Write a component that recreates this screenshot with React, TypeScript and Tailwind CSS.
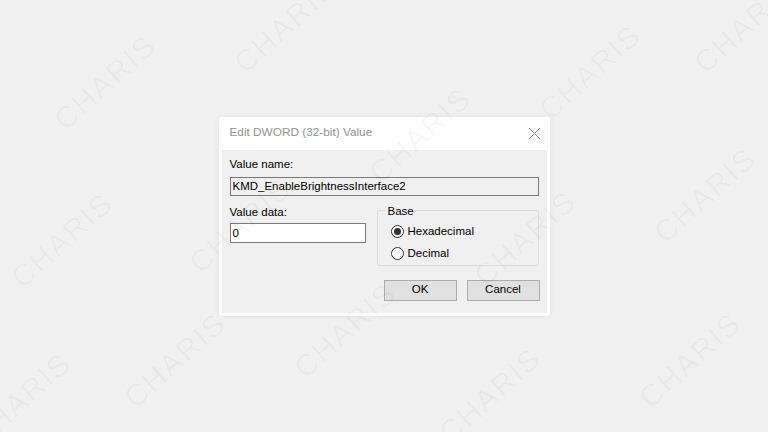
import React from 'react';

const marks: [number, number][] = [
  [105, 82],
  [285, 25],
  [420, 135],
  [590, 72],
  [745, 25],
  [62, 240],
  [240, 225],
  [525, 238],
  [705, 195],
  [175, 360],
  [345, 330],
  [490, 395],
  [690, 360],
  [20, 400],
];

const Watermark = () => (
  <div className="pointer-events-none absolute inset-0 overflow-hidden">
    {marks.map(([x, y], i) => (
      <span
        key={i}
        className="absolute -translate-x-1/2 -translate-y-1/2 -rotate-[42deg] font-['Liberation_Sans',sans-serif] text-[30px] font-normal tracking-[2px] text-black/[0.035]"
        style={{ left: x, top: y }}
      >
        CHARIS
      </span>
    ))}
  </div>
);

const Radio = ({ checked, label }: { checked?: boolean; label: string }) => (
  <label className="flex items-center gap-[3px] h-[22px]">
    <span className="w-[13px] h-[13px] rounded-full border border-[#333] bg-white flex items-center justify-center">
      {checked && <span className="w-[7px] h-[7px] rounded-full bg-[#333]" />}
    </span>
    <span>{label}</span>
  </label>
);

export default function App() {
  return (
    <div className="relative w-full h-[432px] bg-[#f0f0f0] flex items-center justify-center font-['Liberation_Sans',Arial,sans-serif] text-[11.5px] text-black">
      <div className="w-[331px] h-[199px] bg-white rounded-[3px] shadow-[0_0_6px_rgba(0,0,0,0.06)] flex flex-col">
        <div className="h-[33px] flex items-center justify-between pl-[11px] pr-[9px]">
          <span className="text-[11.8px] text-[#929292]">Edit DWORD (32-bit) Value</span>
          <svg width="13" height="13" viewBox="0 0 13 13" className="text-[#8a8a8a]">
            <path d="M1 1 L12 12 M12 1 L1 12" stroke="currentColor" strokeWidth="1" />
          </svg>
        </div>
        <div className="flex-1 mx-[3px] mb-[3px] bg-[#f0f0f0] px-[8px] pt-[7px] flex flex-col">
          <div className="h-[14px] leading-[14px]">Value name:</div>
          <div className="mt-[6px] h-[19px] border border-[#7a7a7a] bg-[#f0f0f0] px-[2px] leading-[17px]">
            KMD_EnableBrightnessInterface2
          </div>
          <div className="flex gap-[11px] mt-[9px]">
            <div className="w-[138px] flex flex-col">
              <div className="h-[14px] leading-[14px]">Value data:</div>
              <div className="mt-[4px] h-[20px] border border-[#7a7a7a] bg-white px-[2px] leading-[18px]">0</div>
            </div>
            <fieldset className="w-[162px] h-[62px] border border-[#dcdcdc] rounded-[2px] px-[13px] -mt-[1px]">
              <legend className="px-[1px] ml-[-5px] leading-[14px]">Base</legend>
              <div className="flex flex-col mt-[3px]">
                <Radio checked label="Hexadecimal" />
                <Radio label="Decimal" />
              </div>
            </fieldset>
          </div>
          <div className="flex justify-end gap-[10px] mt-[14px] -mr-[1px]">
            <button className="w-[73px] h-[21px] border border-[#adadad] bg-[#e1e1e1]">OK</button>
            <button className="w-[73px] h-[21px] border border-[#adadad] bg-[#e1e1e1]">Cancel</button>
          </div>
        </div>
      </div>
      <Watermark />
    </div>
  );
}
